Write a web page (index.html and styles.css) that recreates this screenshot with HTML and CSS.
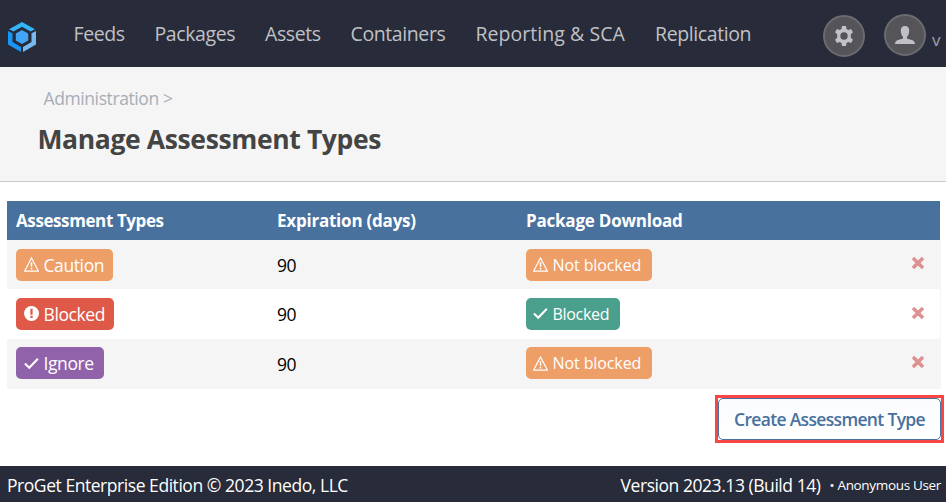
FILE: index.html
```html
<!DOCTYPE html>
<html lang="en">
<head>
<meta charset="utf-8">
<title>Manage Assessment Types</title>
<link rel="stylesheet" href="styles.css">
</head>
<body>
<svg class="symbols" aria-hidden="true">
  <symbol id="warning" viewBox="0 0 16 16"><path d="M8 1 15.3 15H.7Z" fill="none" stroke="currentColor" stroke-width="1.3"/><path d="M7.2 5.500h1.6v5H7.2zM7.2 11.500h1.6v1.7H7.2z" fill="currentColor"/></symbol>
  <symbol id="check" viewBox="0 0 16 16"><path d="m1 8 4.6 4.5L14.8 3" fill="none" stroke="currentColor" stroke-width="2.2"/></symbol>
  <symbol id="alert" viewBox="0 0 16 16"><circle cx="8" cy="8" r="8" fill="currentColor"/><path d="M6.8 3h2.4v6.2H6.8zM6.8 10.5h2.4v2.3H6.8z" fill="#de5948"/></symbol>
  <symbol id="cross" viewBox="0 0 14 14"><path d="m2 2 10 10M12 2 2 12" fill="none" stroke="currentColor" stroke-width="3.6"/></symbol>
</svg>
<header class="topbar">
  <svg class="logo" viewBox="0 0 28 30"><path d="M14 0 27 7.2 22.5 9.6 14 4.8 5.5 9.6 1 7.2Z" fill="#33b5f7"/><path d="M0 9 4.500 11.300V20L13 25V30L0 22.500Z" fill="#1797f5"/><path d="M28 9 23.500 11.300V20L15 25V30L28 22.500Z" fill="#76baf0"/><path d="m14 8 6.200 3.500v7L14 22l-6.200-3.500v-7Z" fill="#41a5f5"/></svg>
  <nav class="nav">
    <a>Feeds</a><a>Packages</a><a>Assets</a><a>Containers</a><a class="wide">Reporting &amp; SCA</a><a>Replication</a>
  </nav>
  <div class="actions">
    <span class="round gear"><svg width="20" height="20" viewBox="0 0 20 20"><path d="M7.500 2.900 8 0h4l.5 2.900 1.800 1 2.700-1 2 3.400-2.200 1.900v3.600l2.200 1.900-2 3.400-2.700-1-1.800 1L12 20H8l-.5-2.900-1.800-1-2.700 1-2-3.400 2.200-1.900V8.200L1 6.300l2-3.400 2.700 1ZM10 6.300a3.700 3.700 0 1 0 0 7.400 3.700 3.700 0 0 0 0-7.400Z" fill="#c0c1c5" fill-rule="evenodd"/></svg></span>
    <span class="round user"><svg width="20" height="18" viewBox="0 0 20 18"><path d="M10 0c3 0 4.400 2 4.200 5-.2 3-1.200 4.800-2.200 5.800v1.600c3 1.200 8 1.200 8 5.600H0c0-4.400 5-4.400 8-5.600v-1.600C7 9.800 6 8 5.800 5 5.600 2 7 0 10 0Z" fill="#c0c1c5"/></svg></span>
    <span class="caret">v</span>
  </div>
</header>
<section class="heading">
  <div class="crumb">Administration &gt;</div>
  <h1>Manage Assessment Types</h1>
</section>
<main>
  <div class="table">
    <div class="row head"><span class="first">Assessment Types</span><span>Expiration (days)</span><span>Package Download</span><span></span></div>
    <div class="row shade"><div><span class="tag caution"><svg><use href="#warning"/></svg>Caution</span></div><span class="days">90</span><div><span class="tag small notblocked"><svg><use href="#warning"/></svg>Not blocked</span></div><svg class="remove"><use href="#cross"/></svg></div>
    <div class="row plain"><div><span class="tag blocked"><svg><use href="#alert"/></svg>Blocked</span></div><span class="days">90</span><div><span class="tag small allowed"><svg><use href="#check"/></svg>Blocked</span></div><svg class="remove"><use href="#cross"/></svg></div>
    <div class="row shade last"><div><span class="tag ignore"><svg><use href="#check"/></svg>Ignore</span></div><span class="days">90</span><div><span class="tag small notblocked"><svg><use href="#warning"/></svg>Not blocked</span></div><svg class="remove"><use href="#cross"/></svg></div>
  </div>
  <div class="buttons"><div class="highlight"><button>Create Assessment Type</button></div></div>
</main>
<footer>
  <span class="edition">ProGet Enterprise Edition © 2023 Inedo, LLC</span>
  <span class="version">Version 2023.13 (Build 14)</span>
  <span class="account">• Anonymous User</span>
</footer>
</body>
</html>
```
FILE: styles.css
```css
* { box-sizing: border-box; }
body { margin: 0; width: 946px; height: 502px; overflow: hidden; background: #fff; font-family: "Open Sans", "Noto Sans", sans-serif; color: #000; display: flex; flex-direction: column; white-space: nowrap; }
.symbols { display: none; }
.topbar { height: 67px; background: #282b39; display: flex; flex: none; }
.logo { width: 28px; height: 30px; margin: 22px 0 0 8px; flex: none; }
.nav { display: grid; grid-template-columns: 81px 110.5px 85.5px 125px 179.5px 120px; margin: 20px 0 0 37.500px; font-size: 19.5px; line-height: 28px; color: #c0c1c5; letter-spacing: -.4px; }
.wide { letter-spacing: .05px; }
.actions { display: flex; margin-left: auto; width: 123px; }
.round { width: 42px; height: 42px; border-radius: 50%; border: 2px solid #6b6b70; background: #555459; display: flex; align-items: center; justify-content: center; flex: none; }
.gear { margin-top: 15px; }
.user { margin: 14px 0 0 19px; }
.caret { margin: 30px 0 0 6px; font-size: 17px; line-height: 20px; color: #a0a2aa; }
.heading { height: 115px; flex: none; background: #f5f5f5; border-bottom: 1px solid #c8c8c8; padding: 18px 0 0 37.500px; }
.crumb { margin-left: 6px; font-size: 17.5px; line-height: 26px; letter-spacing: -.4px; color: #a6adb7; }
h1 { margin: 11px 0 0; font-size: 26.5px; line-height: 34px; font-weight: 700; letter-spacing: -.37px; color: #444; }
main { height: 284px; flex: none; padding: 19px 2px 0 7px; }
.table { width: 934px; }
.row { display: grid; grid-template-columns: 261px 249px 1fr 38px; height: 49px; padding-left: 9px; align-items: center; }
.head { width: 933px; height: 39px; background: #48719e; color: #fff; font-size: 17px; font-weight: 700; letter-spacing: -.22px; }
.first { letter-spacing: -.4px; }
.shade { background: #f5f5f5; }
.plain { height: 50px; border-right: 1px solid #f5f5f5; padding-bottom: 1px; }
.last { height: 50px; padding-bottom: 2px; }
.days { font-size: 17.5px; letter-spacing: -.4px; margin-top: 1px; }
.tag { display: inline-flex; align-items: center; height: 32px; border-radius: 5px; padding-left: 8px; color: #fff; font-size: 17.5px; letter-spacing: -.4px; vertical-align: middle; }
.tag svg { width: 15px; height: 15px; margin-right: 4.500px; flex: none; }
.small { font-size: 16px; padding-left: 7px; letter-spacing: -.1px; }
.caution { width: 97px; background: #ee9e67; }
.blocked { width: 98px; background: #de5948; }
.ignore { width: 88px; background: #9062aa; }
.notblocked { width: 126px; background: #ee9e67; }
.allowed { width: 94px; background: #4b9f8d; letter-spacing: -.3px; }
.remove { width: 14px; height: 14px; margin: -3px 0 0 8px; color: #df9191; }
.plain .remove { margin-left: 9px; margin-top: -1px; }
.buttons { display: flex; justify-content: flex-end; margin-top: 6px; }
.highlight { width: 229px; height: 48px; border: 3px solid #fa4545; background: #fff; }
button { width: 223px; height: 42px; border: 1px solid #48719e; border-radius: 5px; background: linear-gradient(#fafbfd, #fff); color: #48719e; font: 600 17.5px "Open Sans", sans-serif; letter-spacing: -.67px; padding: 0; }
footer { height: 36px; flex: none; background: #282b39; color: #fff; display: flex; align-items: center; padding: 2px 5px 0 7px; font-size: 17.5px; letter-spacing: -.45px; }
.version { margin-left: auto; }
.account { margin-left: 9px; font-size: 13.5px; letter-spacing: -.33px; }
```
